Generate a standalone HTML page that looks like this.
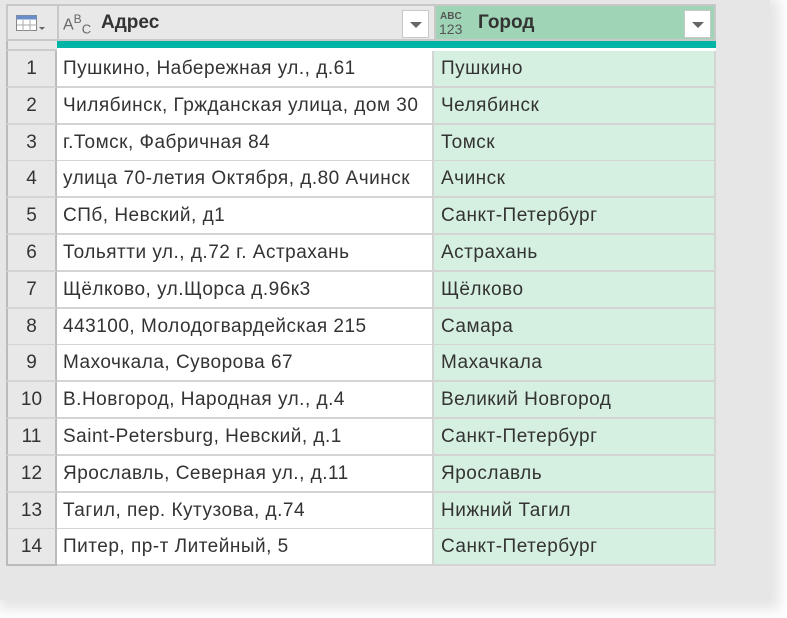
<!DOCTYPE html>
<html><head><meta charset="utf-8"><style>
html,body{margin:0;padding:0;width:787px;height:618px;overflow:hidden;background:#fff;font-family:"Liberation Sans",sans-serif;}
.bg{position:absolute;left:0;top:0;width:770px;height:600px;background:#e6e6e6;box-shadow:4px 4px 12px 6px #e6e6e6;}
.t{position:absolute;left:6px;top:4px;width:710px;}
.hdr{position:absolute;top:0;height:37px;background:#e8e8e8;border:2px solid #c8c8c8;box-sizing:border-box;}
.row{position:absolute;left:0;width:710px;height:37px;}
.c{position:absolute;top:0;height:37px;box-sizing:border-box;border-right:2px solid #d4d4d4;border-bottom:2px solid #d4d4d4;font-size:19px;letter-spacing:0.5px;color:#333;line-height:35px;white-space:nowrap;overflow:hidden;}
.i{left:0;width:51px;background:#e8e8e8;text-align:center;border-left:2px solid #bbb;border-right:2px solid #bbb;letter-spacing:0;}
.a{left:51px;width:377px;background:#fff;padding-left:6px;}
.g{left:428px;width:282px;background:#d5efe0;padding-left:7px;}
.dd{position:absolute;top:6px;width:27px;height:28px;background:#fff;border:1px solid #c8c8c8;box-sizing:border-box;}
.dd:after{content:"";position:absolute;left:7px;top:11px;border-left:6px solid transparent;border-right:6px solid transparent;border-top:6px solid #666;}
</style></head><body>
<div class="bg"></div>
<div class="t">
 <div class="hdr" style="left:0;width:53px;"></div>
 <svg style="position:absolute;left:10px;top:11px" width="30" height="18"><rect x="0.5" y="0.5" width="20" height="15" fill="#fff" stroke="#888"/><rect x="0.5" y="0.5" width="20" height="4" fill="#6a8fc8"/><path d="M7 5v11M14 5v11M1 10h20" stroke="#aaa"/><path d="M23 12h6l-3 3z" fill="#666"/></svg>
 <div class="hdr" style="left:51px;width:379px;"></div>
 <div style="position:absolute;left:57px;top:8px;font-size:16px;color:#666;">A<sup style="font-size:12px">B</sup><sub style="font-size:13px">C</sub></div>
 <div style="position:absolute;left:95px;top:8px;font-size:19px;font-weight:bold;color:#333;">Адрес</div>
 <div class="dd" style="left:396px;"></div>
 <div class="hdr" style="left:428px;width:282px;background:#9fd5b6;"></div>
 <div style="position:absolute;left:434px;top:8px;font-size:10px;line-height:10px;color:#555;font-weight:bold;">ABC</div>
 <div style="position:absolute;left:433px;top:18px;font-size:14px;line-height:14px;color:#555;">123</div>
 <div style="position:absolute;left:472px;top:8px;font-size:19px;font-weight:bold;color:#333;">Город</div>
 <div class="dd" style="left:678px;"></div>
 <div style="position:absolute;left:0;top:37px;width:53px;height:10px;background:#e8e8e8;border-left:2px solid #bbb;border-right:2px solid #bbb;box-sizing:border-box;border-bottom:2px solid #ccc"></div>
 <div style="position:absolute;left:51px;top:37px;width:659px;height:7px;background:#00b5a5;"></div>
 <div style="position:absolute;left:51px;top:44px;width:659px;height:3px;background:#fff;"></div>
 <div style="position:absolute;left:0;top:47px;width:710px;">
  <div class="row" style="top:0"><div class="c i">1</div><div class="c a">Пушкино, Набережная ул., д.61</div><div class="c g">Пушкино</div></div>
  <div class="row" style="top:36.8px"><div class="c i">2</div><div class="c a">Чилябинск, Гржданская улица, дом 30</div><div class="c g">Челябинск</div></div>
  <div class="row" style="top:73.6px"><div class="c i">3</div><div class="c a">г.Томск, Фабричная 84</div><div class="c g">Томск</div></div>
  <div class="row" style="top:110.4px"><div class="c i">4</div><div class="c a">улица 70-летия Октября, д.80 Ачинск</div><div class="c g">Ачинск</div></div>
  <div class="row" style="top:147.2px"><div class="c i">5</div><div class="c a">СПб, Невский, д1</div><div class="c g">Санкт-Петербург</div></div>
  <div class="row" style="top:184px"><div class="c i">6</div><div class="c a">Тольятти ул., д.72 г. Астрахань</div><div class="c g">Астрахань</div></div>
  <div class="row" style="top:220.8px"><div class="c i">7</div><div class="c a">Щёлково, ул.Щорса д.96к3</div><div class="c g">Щёлково</div></div>
  <div class="row" style="top:257.6px"><div class="c i">8</div><div class="c a">443100, Молодогвардейская 215</div><div class="c g">Самара</div></div>
  <div class="row" style="top:294.4px"><div class="c i">9</div><div class="c a">Махочкала, Суворова 67</div><div class="c g">Махачкала</div></div>
  <div class="row" style="top:331.2px"><div class="c i">10</div><div class="c a">В.Новгород, Народная ул., д.4</div><div class="c g">Великий Новгород</div></div>
  <div class="row" style="top:368px"><div class="c i">11</div><div class="c a">Saint-Petersburg, Невский, д.1</div><div class="c g">Санкт-Петербург</div></div>
  <div class="row" style="top:404.8px"><div class="c i">12</div><div class="c a">Ярославль, Северная ул., д.11</div><div class="c g">Ярославль</div></div>
  <div class="row" style="top:441.6px"><div class="c i">13</div><div class="c a">Тагил, пер. Кутузова, д.74</div><div class="c g">Нижний Тагил</div></div>
  <div class="row" style="top:478.4px"><div class="c i" style="border-bottom-color:#bbb">14</div><div class="c a">Питер, пр-т Литейный, 5</div><div class="c g">Санкт-Петербург</div></div>
 </div>
</div>
</body></html>
